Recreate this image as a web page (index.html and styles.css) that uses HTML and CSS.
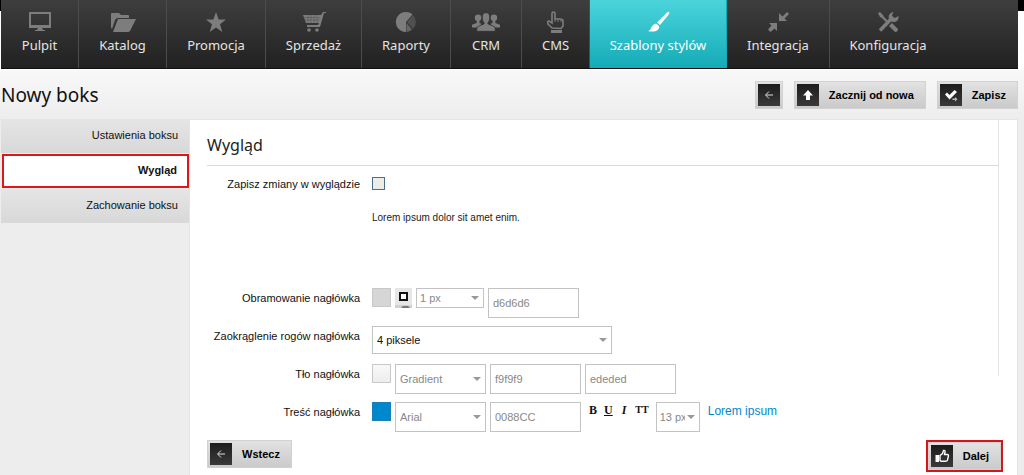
FILE: index.html
```html
<!DOCTYPE html>
<html lang="pl">
<head>
<meta charset="utf-8">
<title>Nowy boks</title>
<link rel="stylesheet" href="styles.css">
</head>
<body>
<nav class="nav">
  <a class="nav-item" href="#"><svg class="nav-icon" viewBox="0 0 24 22"><path fill="none" stroke="currentColor" stroke-width="2" d="M2 2h20v14H2z"/><path d="M1 14h22v3H1zM10 17h4l1 2h2v1H7v-1h2z"/></svg><span>Pulpit</span></a>
  <a class="nav-item" href="#"><svg class="nav-icon wide" viewBox="0 0 28 22"><path d="M2 3q0-1 1-1h7l2 2h7q1 0 1 1v2H9q-2 0-3 2L3 18q-1-1-1-2z"/><path d="M9 8h18L21 20q-1 1-2 1H4z"/></svg><span>Katalog</span></a>
  <a class="nav-item" href="#"><svg class="nav-icon" viewBox="0 0 24 22"><path d="M12 1l2.600 7.600H22l-6 4.700 2.300 7.700-6.300-4.600L5.700 21 8 13.300 2 8.600h7.400z"/></svg><span>Promocja</span></a>
  <a class="nav-item" href="#"><svg class="nav-icon" viewBox="0 0 24 22"><path d="M1 4h18l2-3h3v1h-2l-4 14H5v-2h11l1-2H4z"/><path fill="none" stroke="#444" stroke-width=".4" d="M2 6.500h16M3 9h15M6 4v8M9 4v8M12 4v8M15 4v8"/><circle cx="7" cy="19" r="1.800"/><circle cx="15" cy="19" r="1.800"/></svg><span>Sprzedaż</span></a>
  <a class="nav-item" href="#"><svg class="nav-icon" viewBox="0 0 24 22"><path d="M12 11V21A10 10 0 1 1 18.500 3.500z"/><path fill="#505050" d="M13 11l6-7a10 10 0 0 1 0 14z"/><path fill="#666" d="M12.500 12l5.500 6.500a9 9 0 0 1-5.500 2.500z"/></svg><span>Raporty</span></a>
  <a class="nav-item" href="#"><svg class="nav-icon wide" viewBox="0 0 30 22"><circle cx="6.500" cy="6.500" r="3.500"/><circle cx="23.500" cy="6.500" r="3.500"/><path d="M0 17v-3l5-2V9h3v3l2 1-2 4zM30 17v-3l-5-2V9h-3v3l-2 1 2 4z"/><path stroke="#2f2f2f" stroke-width=".8" d="M11 6q0-5 4-5t4 5q0 4-2 6v1l7 3q1 1 1 5H5q0-4 1-5l7-3v-1q-2-2-2-6z"/></svg><span>CRM</span></a>
  <a class="nav-item" href="#"><svg class="nav-icon" viewBox="0 0 24 22"><path fill="none" stroke="currentColor" stroke-width="1.600" d="M8 17l-4-4q-1-3 1-3l3 2V2q1.500-2 3 0v6h5q3 0 3 2v5l-2 2.500z"/><path d="M10.500 8h1v3h-1zM13.500 8h1v3h-1zM16.500 8h1v3h-1zM7 19h11v3H7z"/></svg><span>CMS</span></a>
  <a class="nav-item active" href="#"><svg class="nav-icon" viewBox="0 0 24 22"><path d="M23 1q1 1-1 3.500L14 14l-3-2.500L20 2.500Q22 0 23 1zM10 12.500l3 2.500q1 3-3 5-4 1-8 0 3-1 3.500-4 1.500-3 4.500-3.500z"/></svg><span>Szablony stylów</span></a>
  <a class="nav-item" href="#"><svg class="nav-icon" viewBox="0 0 24 22"><path d="M13 2v8h8l-2.500-2.500L23 3l-2-2-4.500 4.500zM11 20v-8H3l2.500 2.500L2 18.500 4.500 21 8.500 17.500z"/></svg><span>Integracja</span></a>
  <a class="nav-item last" href="#"><svg class="nav-icon" viewBox="0 0 24 22"><path fill="none" stroke="currentColor" stroke-width="3.500" d="M4 19.500L16 7"/><path d="M22.500 5a5 5 0 1 1-5-4L16 4l1 2 2 1z"/><path d="M2 2l2-1 3 3 1 2 4 4-1.500 1.500L6 7 4 6zM13 15l3-3 6 6q0 3-3 3z"/></svg><span>Konfiguracja</span></a>
</nav>

<div class="page">
  <header class="header">
    <h1>Nowy boks</h1>
    <div class="actions">
      <button class="btn" aria-label="Wróć"><svg class="btn-icon" viewBox="0 0 22 22"><path class="thin" d="M15 11H8m3-3.500L7.500 11l3.500 3.500"/></svg></button>
      <button class="btn"><svg class="btn-icon" viewBox="0 0 22 22"><path d="M11 6l5 5.500h-3V16H9v-4.500H6z"/></svg><span class="label">Zacznij od nowa</span></button>
      <button class="btn"><svg class="btn-icon" viewBox="0 0 22 22"><path d="M5 10.500L7 8.500l2.500 2.500L14.500 6 17 8l-7.500 7.500z"/><path fill="#bbb" d="M12.500 14.500H15V13l2.500 2.300L15 17.500V16h-2.500z"/></svg><span class="label">Zapisz</span></button>
    </div>
  </header>

  <div class="columns">
    <ul class="side">
      <li><a href="#">Ustawienia boksu</a></li>
      <li class="current"><a href="#">Wygląd</a></li>
      <li><a href="#">Zachowanie boksu</a></li>
    </ul>

    <form class="panel">
      <div class="panel-body">
        <h2>Wygląd</h2>
        <div class="row save-row">
          <label class="name" for="save">Zapisz zmiany w wyglądzie</label>
          <div class="fields"><input class="check" type="checkbox" id="save"></div>
        </div>
        <div class="row sample-row">
          <p class="sample">Lorem ipsum dolor sit amet enim.</p>
        </div>
        <div class="row">
          <label class="name" for="border-size">Obramowanie nagłówka</label>
          <div class="fields">
            <button type="button" class="swatch grey" aria-label="Kolor obramowania"></button>
            <button type="button" class="border-btn" aria-label="Krawędzie"><svg viewBox="0 0 17 20"><path fill="#e6e6e6" d="M0 0h17v17H0z"/><path fill="#fff" stroke="#111" stroke-width="2" d="M5 5h7v7H5z"/><path fill="#d0d0d0" d="M0 17h17v3H0z"/><path fill="#777" d="M6 20l2-2h5l2 2z"/></svg></button>
            <span class="select short"><select id="border-size"><option>1 px</option></select></span>
            <input class="text" type="text" value="d6d6d6" aria-label="Kolor">
          </div>
        </div>
        <div class="row">
          <label class="name" for="radius">Zaokrąglenie rogów nagłówka</label>
          <div class="fields"><span class="select long"><select id="radius"><option>4 piksele</option></select></span></div>
        </div>
        <div class="row">
          <label class="name" for="bg">Tło nagłówka</label>
          <div class="fields">
            <button type="button" class="swatch light" aria-label="Kolor tła"></button>
            <span class="select"><select id="bg"><option>Gradient</option></select></span>
            <input class="text" type="text" value="f9f9f9" aria-label="Kolor początkowy">
            <input class="text" type="text" value="ededed" aria-label="Kolor końcowy">
          </div>
        </div>
        <div class="row">
          <label class="name" for="font">Treść nagłówka</label>
          <div class="fields">
            <button type="button" class="swatch blue" aria-label="Kolor tekstu"></button>
            <span class="select"><select id="font"><option>Arial</option></select></span>
            <input class="text" type="text" value="0088CC" aria-label="Kolor tekstu">
            <span class="styles"><button type="button" class="b">B</button><button type="button" class="u">U</button><button type="button" class="i">I</button><button type="button" class="tt">TT</button></span>
            <span class="select tiny"><select aria-label="Rozmiar"><option>13 px</option></select></span>
            <a class="preview" href="#">Lorem ipsum</a>
          </div>
        </div>
      </div>
      <div class="footer">
        <button type="button" class="btn"><svg class="btn-icon" viewBox="0 0 22 22"><path class="thin" d="M15 11H8m3-3.500L7.500 11l3.500 3.500"/></svg><span class="label">Wstecz</span></button>
        <span class="marked"><button type="button" class="btn"><svg class="btn-icon" viewBox="0 0 22 22"><path d="M4.500 10H8v7H4.500z"/><path fill="none" stroke="#fff" stroke-width="1.400" d="M9 10.500l2.500-2 1-3q2-.5 1.500 1.500l-.5 2.500h3q1 0 1 1.200L16.500 15q-.5 1.300-2 1.300H10L9 15.500z"/></svg><span class="label">Dalej</span></button></span>
      </div>
    </form>
  </div>
</div>
</body>
</html>
```
FILE: styles.css
```css
* { box-sizing: border-box; }

body {
  margin: 0;
  min-height: 100vh;
  display: flex;
  flex-direction: column;
  background: linear-gradient(#000, #000) 0 0 / 100% 11px no-repeat, #fff;
  font: 11px/16px "Liberation Sans", Arial, sans-serif;
  color: #111;
}

button, input, select { font: inherit; margin: 0; }
a { color: inherit; text-decoration: none; }

.nav {
  display: grid;
  grid-template-columns: 78fr 88fr 99fr 96fr 89fr 71fr 68fr 137fr 103fr 188fr;
  height: 69px;
  margin: 0 6px 0 1px;
  background: linear-gradient(#3e3e3e, #212121);
  border-bottom: 1px solid #111;
}
.nav-item {
  display: flex;
  flex-direction: column;
  align-items: center;
  padding-top: 11px;
  gap: 2px;
  border-right: 1px solid #4c4c4c;
  color: #e4e4e4;
  font: 13px/20px "Noto Sans", sans-serif;
  white-space: nowrap;
}
.nav-icon { width: 24px; height: 22px; color: #7d7d7d; fill: currentColor; }
.nav-icon.wide { width: 28px; }
.nav-item.active { background: linear-gradient(#4bd4dc, #14abb7); border-color: #14abb7; color: #fff; }
.active .nav-icon { color: #fff; }
.nav-item.last { border: 0; padding-right: 72px; }

.page {
  flex: 1;
  display: flex;
  flex-direction: column;
  padding: 0 6px 0 1px;
  background: linear-gradient(#f8f8f8, #ededed 50px);
  border-top: 1px solid #fff;
}

.header { display: flex; justify-content: space-between; align-items: center; height: 49px; }
h1 { margin: 0; font: 19px/24px "Noto Sans", sans-serif; color: #111; }
.actions { display: flex; gap: 11px; }

.btn {
  display: flex;
  align-items: center;
  height: 28px;
  padding: 2px;
  border: 1px solid #d2d2d2;
  background: linear-gradient(#e2e2e2, #cacaca);
  color: #000;
  font-weight: bold;
}
.btn-icon { width: 22px; height: 22px; background: linear-gradient(#1c1c1c, #3a3a3a); fill: #fff; }
.btn-icon .thin { fill: none; stroke: #ddd; stroke-width: 1; }
.btn .label { padding: 0 9px 0 10px; }

.columns { flex: 1; display: flex; }
.side { width: 188px; margin: 0; padding: 0; list-style: none; text-align: right; }
.side li { height: 34px; margin-bottom: 1px; padding: 8px 11px; background: linear-gradient(#e5e5e5, #d8d8d8); }
.side .current { border: 2px solid #e0161b; margin-left: 1px; padding: 6px 10px; background: #fff; font-weight: bold; }

.panel { flex: 1; padding: 0 18px 0 17px; background: #fff; border: 1px solid #e4e4e4; border-bottom: 0; }
.panel-body { background: linear-gradient(#e4e4e4, #e4e4e4) right top / 1px 256px no-repeat; }
h2 { margin: 0; padding: 13px 0 8px; border-bottom: 1px solid #d9d9d9; font: 16px/24px "Noto Sans", sans-serif; color: #222; }

.row { display: grid; grid-template-columns: 153px 1fr; column-gap: 12px; min-height: 30px; margin-bottom: 8px; }
.name { padding-top: 2px; text-align: right; white-space: nowrap; }
.fields { display: flex; align-items: flex-start; gap: 4px; }
.save-row { padding-top: 8px; margin: 0; height: 44px; }
.sample-row { height: 78px; margin: 0; }
.sample { grid-column: 2; margin: 0; font-size: 10px; color: #222; }
.check { appearance: none; width: 13px; height: 13px; margin-top: 3px; border: 1px solid #47708f; background: #eeece8; }

.swatch { width: 19px; height: 19px; padding: 0; border: 1px solid #c8c8c8; }
.grey { background: #d6d6d6; }
.light { background: linear-gradient(#f9f9f9, #ededed); }
.blue { background: #0088cc; border-color: #1b7fb4; }
.border-btn { width: 17px; height: 20px; padding: 0; border: 0; background: none; }
.border-btn svg { display: block; }

.select { position: relative; width: 91px; height: 30px; }
.select::after {
  content: "";
  position: absolute;
  right: 5px;
  top: 50%;
  margin-top: -2px;
  border: solid transparent;
  border-width: 4px 4px 0;
  border-top-color: #999;
}
.select select {
  appearance: none;
  width: 100%;
  height: 100%;
  padding: 0 18px 0 4px;
  border: 1px solid #c3c3c3;
  border-radius: 0;
  background: #fff;
  color: #888;
}
.select.short { width: 68px; height: 20px; }
.select.short select { padding-left: 3px; }
.select.long { width: 240px; height: 28px; }
.select.long select { color: #111; }
.select.tiny { width: 44px; }
.select.tiny select { padding: 0 14px 0 3px; }
.text { width: 91px; height: 30px; padding: 0 4px; border: 1px solid #c3c3c3; color: #888; background: #fff; }

.styles { display: flex; gap: 7px; padding: 0 3px 0 4px; }
.styles button { padding: 0; border: 0; background: none; color: #111; font: bold 12px/16px "Liberation Serif", serif; }
.styles .u { text-decoration: underline; }
.styles .i { padding: 0 2px; font-style: italic; }
.styles .tt { font-size: 10px; }
.preview { padding: 1px 4px; font-size: 12px; color: #0088cc; white-space: nowrap; }

.footer { display: flex; justify-content: space-between; align-items: flex-start; }
.marked { margin-right: -4px; border: 2px solid #d2161b; }
```
